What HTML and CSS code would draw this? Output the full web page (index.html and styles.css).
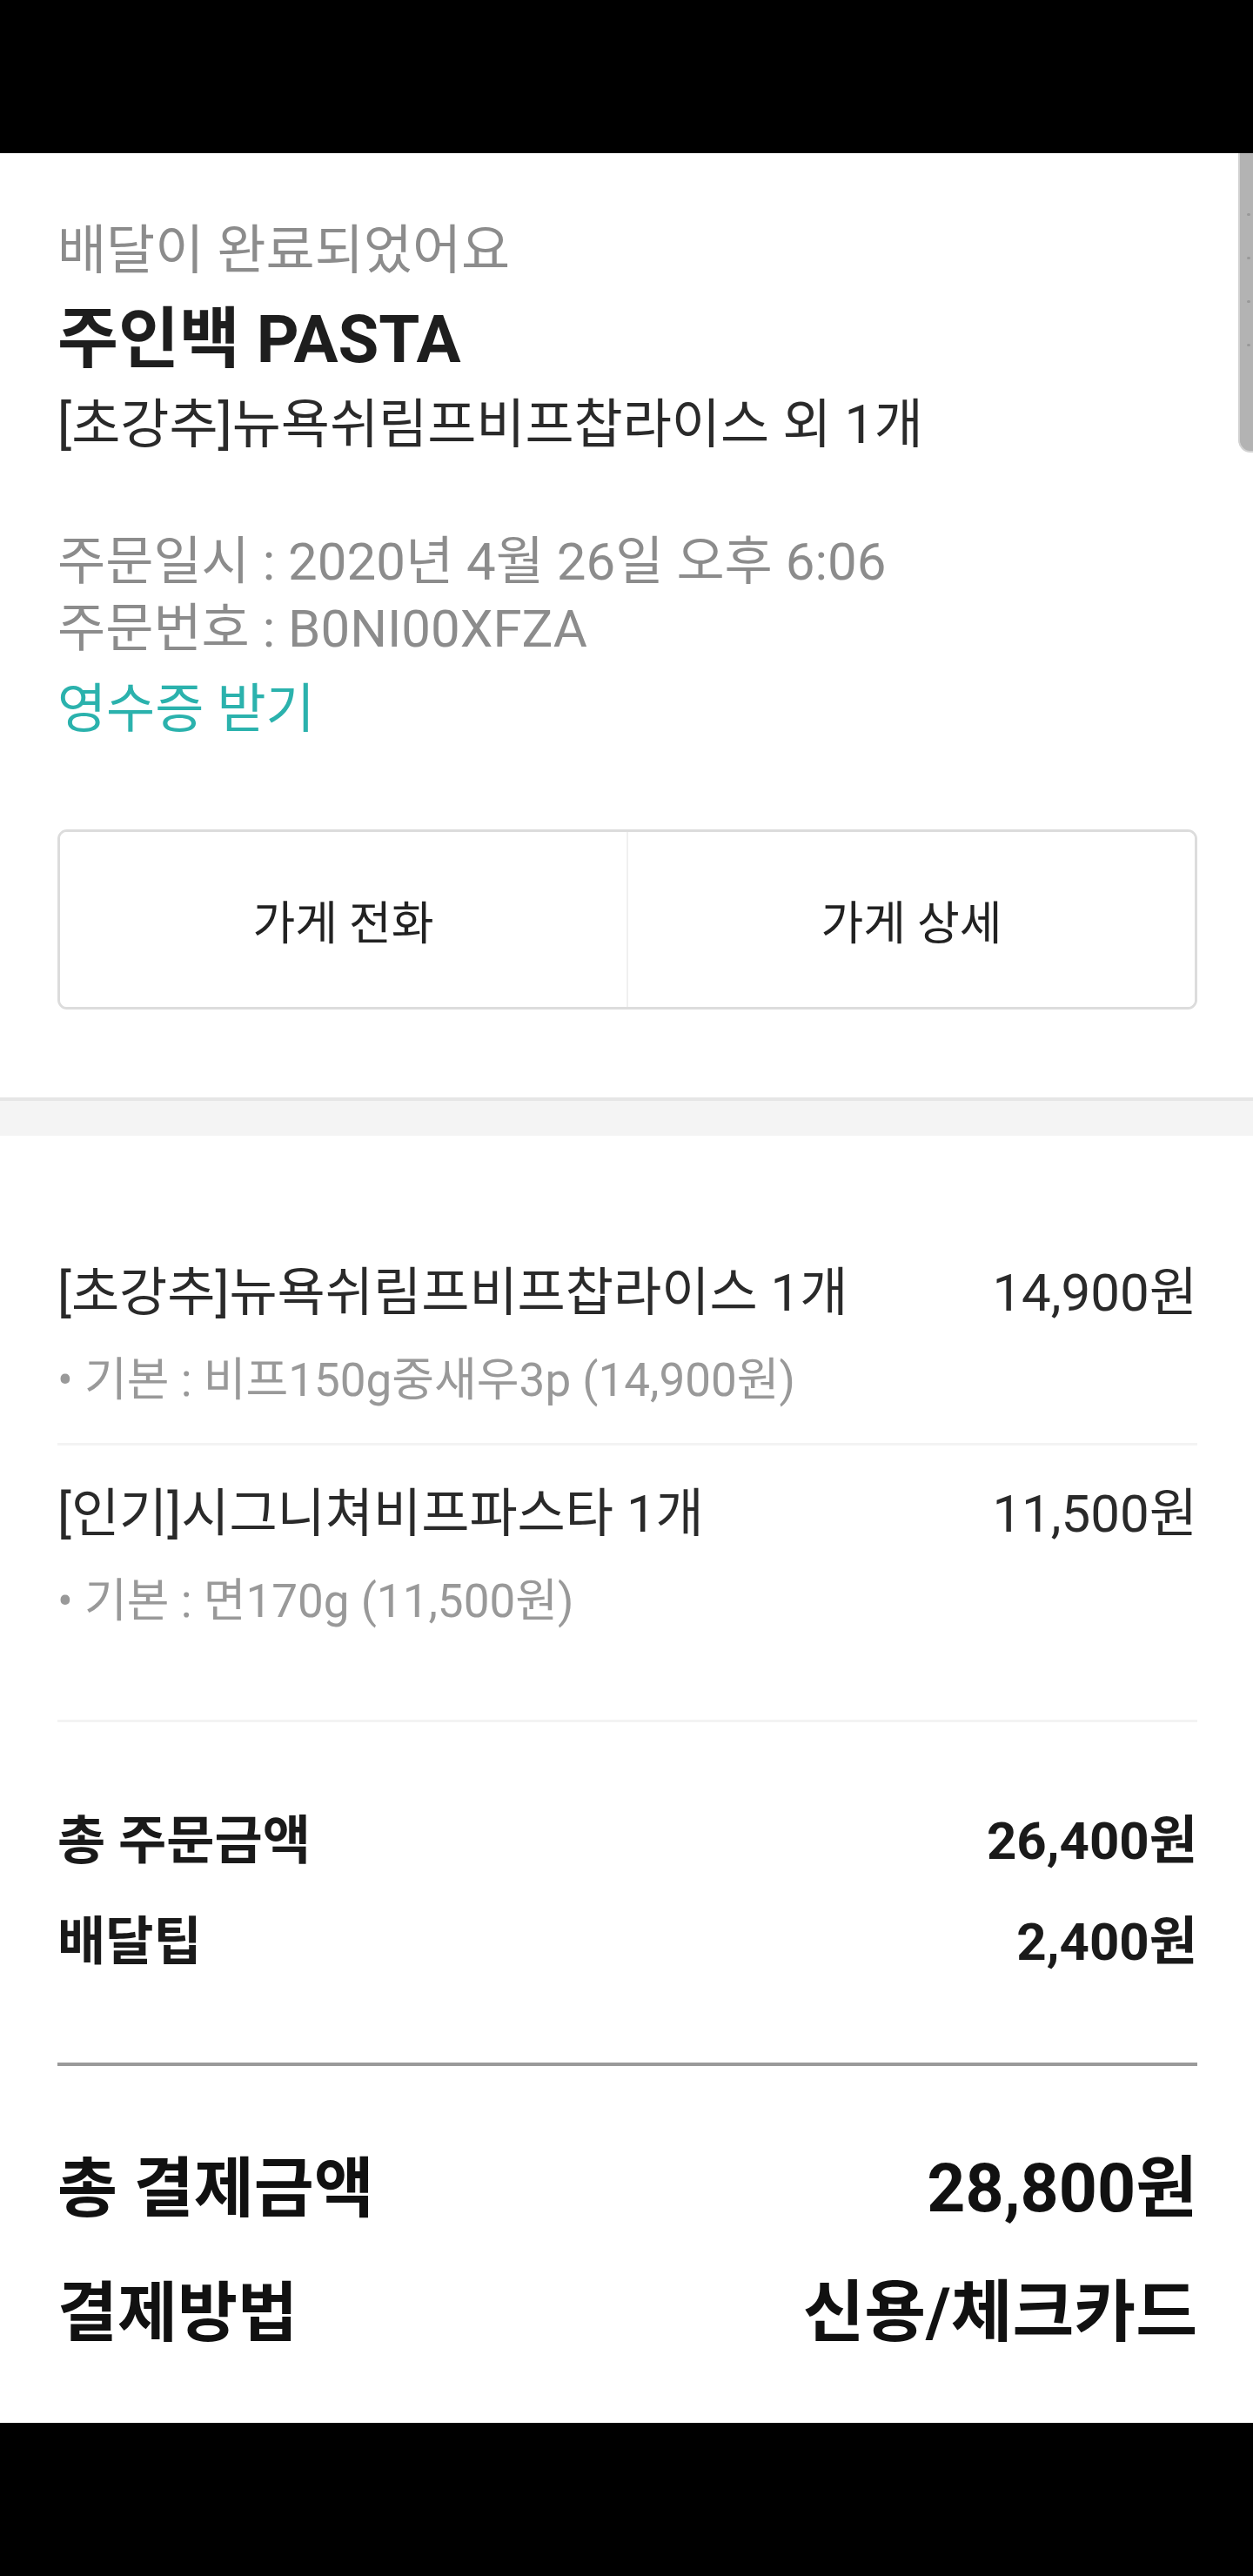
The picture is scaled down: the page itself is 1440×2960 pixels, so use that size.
FILE: index.html
```html
<!DOCTYPE html>
<html lang="ko">
<head>
<meta charset="utf-8">
<title>주문 상세</title>
<link rel="stylesheet" href="styles.css">
</head>
<body>
<div class="screen">
  <div class="statusbar"></div>
  <main class="content">
    <div class="scrollthumb"><i></i><i></i><i></i><i></i></div>

    <section class="summary">
      <p class="status">배달이 완료되었어요</p>
      <h1 class="store">주인백 PASTA</h1>
      <p class="menu">[초강추]뉴욕쉬림프비프찹라이스 외 1개</p>
      <div class="meta">
        <p>주문일시 : 2020년 4월 26일 오후 6:06</p>
        <p>주문번호 : B0NI00XFZA</p>
      </div>
      <a class="receipt" href="#">영수증 받기</a>
      <div class="actions">
        <button class="action" type="button">가게 전화</button>
        <button class="action" type="button">가게 상세</button>
      </div>
    </section>

    <div class="band"></div>

    <section class="order">
      <ul class="items">
        <li class="item">
          <div class="item-row">
            <span class="item-name">[초강추]뉴욕쉬림프비프찹라이스 1개</span>
            <span class="item-price">14,900원</span>
          </div>
          <p class="item-option">• 기본 : 비프150g중새우3p (14,900원)</p>
        </li>
        <li class="item">
          <div class="item-row">
            <span class="item-name">[인기]시그니쳐비프파스타 1개</span>
            <span class="item-price">11,500원</span>
          </div>
          <p class="item-option">• 기본 : 면170g (11,500원)</p>
        </li>
      </ul>

      <div class="totals">
        <div class="sum-row"><span>총 주문금액</span><span>26,400원</span></div>
        <div class="sum-row"><span>배달팁</span><span>2,400원</span></div>
      </div>

      <div class="payment">
        <div class="pay-row"><span class="pay-label">총 결제금액</span><span class="pay-value">28,800원</span></div>
        <div class="pay-row"><span class="pay-label">결제방법</span><span class="pay-value">신용/체크카드</span></div>
      </div>
    </section>
  </main>
  <div class="navbar"></div>
</div>
</body>
</html>
```

FILE: styles.css
```css
* {
  box-sizing: border-box;
}

html, body {
  margin: 0;
  padding: 0;
  background: #000;
}

body {
  font-family: Roboto, "Noto Sans CJK KR", "Noto Sans", sans-serif;
  color: #222;
}

p, h1, ul {
  margin: 0;
  padding: 0;
}

.screen {
  width: 1440px;
  height: 2960px;
  display: flex;
  flex-direction: column;
  background: #000;
}

.statusbar {
  height: 176px;
  flex: none;
  background: #000;
}

.navbar {
  height: 176px;
  flex: none;
  background: #000;
}

.content {
  position: relative;
  height: 2608px;
  flex: none;
  background: #fff;
  overflow: hidden;
}

/* overlay scroll thumb at the right edge */
.scrollthumb {
  position: absolute;
  top: 0;
  right: 0;
  width: 17px;
  height: 344px;
  background: #b3b3b3;
  border-left: 2px solid #d2d2d2;
  border-bottom: 2px solid #d2d2d2;
  border-bottom-left-radius: 14px;
  display: flex;
  flex-direction: column;
  align-items: flex-end;
  padding-top: 69px;
  padding-right: 3px;
  gap: 47px;
}

.scrollthumb i {
  display: block;
  width: 4px;
  height: 3px;
  border-radius: 2px;
  background: #999;
}

/* ---------- summary ---------- */
.summary {
  padding: 74px 64px 101px 66px;
}

.status {
  font-size: 61px;
  line-height: 76px;
  color: #8c8c8c;
}

.store {
  margin-top: 16px;
  font-size: 76px;
  line-height: 96px;
  font-weight: 700;
  color: #1e1e1e;
}

.menu {
  margin-top: 12px;
  font-size: 61px;
  line-height: 76px;
  color: #2a2a2a;
}

.meta {
  margin-top: 81px;
}

.meta p {
  font-size: 60px;
  line-height: 77px;
  color: #8c8c8c;
}

.receipt {
  display: block;
  margin-top: 16px;
  font-size: 61px;
  line-height: 76px;
  color: #2bb2ad;
  text-decoration: none;
}

.actions {
  margin-top: 100px;
  height: 207px;
  display: flex;
  border: 3px solid #dcdcdc;
  border-radius: 11px;
  overflow: hidden;
}

.action {
  flex: 1;
  border: none;
  background: #fff;
  font-family: inherit;
  font-size: 53px;
  color: #222;
  padding: 0;
}

.action + .action {
  border-left: 2px solid #f0f0f0;
}

/* ---------- separator band ---------- */
.band {
  height: 44px;
  border-top: 4px solid #e6e6e6;
  background: #f4f4f4;
}

/* ---------- order ---------- */
.order {
  padding: 102px 64px 0 66px;
}

.items {
  list-style: none;
}

.item {
  padding: 41px 0 37px;
}

.item + .item {
  border-top: 3px solid #f3f3f3;
}

.item-row {
  display: flex;
  justify-content: space-between;
  font-size: 60px;
  line-height: 76px;
  color: #2a2a2a;
}

.item-option {
  margin-top: 27px;
  font-size: 53px;
  line-height: 70px;
  color: #999;
}

.totals {
  margin-top: 64px;
  border-top: 3px solid #f3f3f3;
  border-bottom: 4px solid #9a9a9a;
  padding: 99px 0 100px;
  display: flex;
  flex-direction: column;
  gap: 40px;
}

.sum-row {
  display: flex;
  justify-content: space-between;
  font-size: 60px;
  line-height: 76px;
  font-weight: 700;
  color: #1a1a1a;
}

.payment {
  padding-top: 96px;
  display: flex;
  flex-direction: column;
  gap: 53px;
}

.pay-row {
  display: flex;
  justify-content: space-between;
  align-items: center;
  height: 90px;
  font-weight: 700;
  color: #111;
}

.pay-label {
  font-size: 75px;
  line-height: 90px;
}

.pay-value {
  font-size: 77px;
  line-height: 90px;
}
```
